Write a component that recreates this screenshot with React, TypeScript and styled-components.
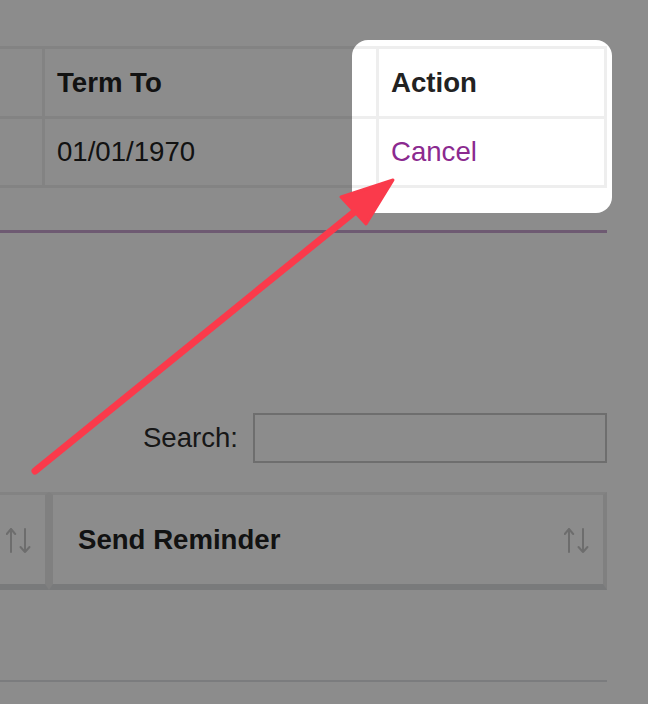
import React from "react";
import styled, { createGlobalStyle } from "styled-components";

const GlobalStyle = createGlobalStyle`
  html, body { margin: 0; padding: 0; background: #ffffff; }
  body { font-family: "Liberation Sans", Arial, Helvetica, sans-serif; }
  * { box-sizing: border-box; }
`;

const Page = styled.div`
  position: relative;
  width: 648px;
  height: 704px;
  overflow: hidden;
  background: #ffffff;
  color: #222222;
  font-size: 27.6px;
`;

/* the page is scrolled horizontally: its left part lies outside the window */
const Content = styled.div`
  margin-left: -208px;
  width: 815px;
  padding-top: 46px;
  display: flex;
  flex-direction: column;
`;

const TermsTable = styled.div`
  display: grid;
  grid-template-columns: 247px 331px 225px;
  grid-template-rows: 67px 66px;
  gap: 3px;
  padding: 3px;
  background: #eeeeee;
`;

const Cell = styled.div<{ $head?: boolean }>`
  background: #ffffff;
  display: flex;
  align-items: center;
  padding: 0 12px;
  font-weight: ${(p) => (p.$head ? 700 : 400)};
  white-space: nowrap;
  overflow: hidden;
`;

const CancelLink = styled.a`
  color: #8b2a8f;
  text-decoration: none;
  cursor: pointer;
`;

const Divider = styled.div`
  margin-top: 42px;
  height: 3px;
  background: #c9a5d0;
`;

const SearchBar = styled.label`
  margin-top: 180px;
  display: flex;
  justify-content: flex-end;
  align-items: center;
  gap: 15px;
  color: #2a2a2a;
`;

const SearchInput = styled.input`
  width: 354px;
  height: 50px;
  border: 2px solid #c9c9c9;
  background: #ffffff;
  font: inherit;
  padding: 0 8px;
  outline: none;
`;

const ListTable = styled.div`
  margin-top: 29px;
  display: flex;
  flex-direction: column;
`;

const HeadRow = styled.div`
  display: grid;
  grid-template-columns: 257px 558px;
`;

const HeadCell = styled.div`
  height: 98px;
  border-style: solid;
  border-width: 3px 4px 6px 4px;
  border-color: #eeeeee #e9e9e9 #dcdee1 #e9e9e9;
  display: flex;
  align-items: center;
  justify-content: space-between;
  padding: 0 13px 0 25px;
  font-weight: 700;
  white-space: nowrap;
`;

const BodyRow = styled.div`
  height: 92px;
  border-bottom: 2px solid #e0e2e5;
`;

const SortIconSvg = styled.svg`
  flex: none;
  width: 26px;
  height: 27px;
  margin-top: 2px;
  margin-left: auto;
`;

const SortIcon = () => (
  <SortIconSvg viewBox="0 0 26 27" fill="none" stroke="#c6c6c6" strokeWidth={2} strokeLinecap="round" strokeLinejoin="round">
    <path d="M5 2 V25 M0.8 7 L5 2 L9.2 7" />
    <path d="M19 2 V25 M14.5 20 L19 25 L23.5 20" />
  </SortIconSvg>
);

const Spotlight = styled.div`
  position: absolute;
  left: 352px;
  top: 40px;
  width: 260px;
  height: 173px;
  border-radius: 16px;
  box-shadow: 0 0 0 2000px rgba(0, 0, 0, 0.45);
  pointer-events: none;
`;

const ArrowLayer = styled.svg`
  position: absolute;
  left: 0;
  top: 0;
  width: 648px;
  height: 704px;
  pointer-events: none;
`;

export default function App() {
  return (
    <>
      <GlobalStyle />
      <Page>
        <Content>
          <TermsTable>
            <Cell $head />
            <Cell $head>Term To</Cell>
            <Cell $head>Action</Cell>
            <Cell />
            <Cell>01/01/1970</Cell>
            <Cell>
              <CancelLink>Cancel</CancelLink>
            </Cell>
          </TermsTable>
          <Divider />
          <SearchBar>
            Search:
            <SearchInput type="search" />
          </SearchBar>
          <ListTable>
            <HeadRow>
              <HeadCell>
                <SortIcon />
              </HeadCell>
              <HeadCell>
                <span>Send Reminder</span>
                <SortIcon />
              </HeadCell>
            </HeadRow>
            <BodyRow />
          </ListTable>
        </Content>
        <Spotlight />
        <ArrowLayer viewBox="0 0 648 704">
          <line x1="35" y1="471" x2="358" y2="209" stroke="#fa3a4b" strokeWidth={7} strokeLinecap="round" />
          <polygon points="393,180 341,197 366,224" fill="#fa3a4b" stroke="#fa3a4b" strokeWidth={3} strokeLinejoin="round" />
        </ArrowLayer>
      </Page>
    </>
  );
}
